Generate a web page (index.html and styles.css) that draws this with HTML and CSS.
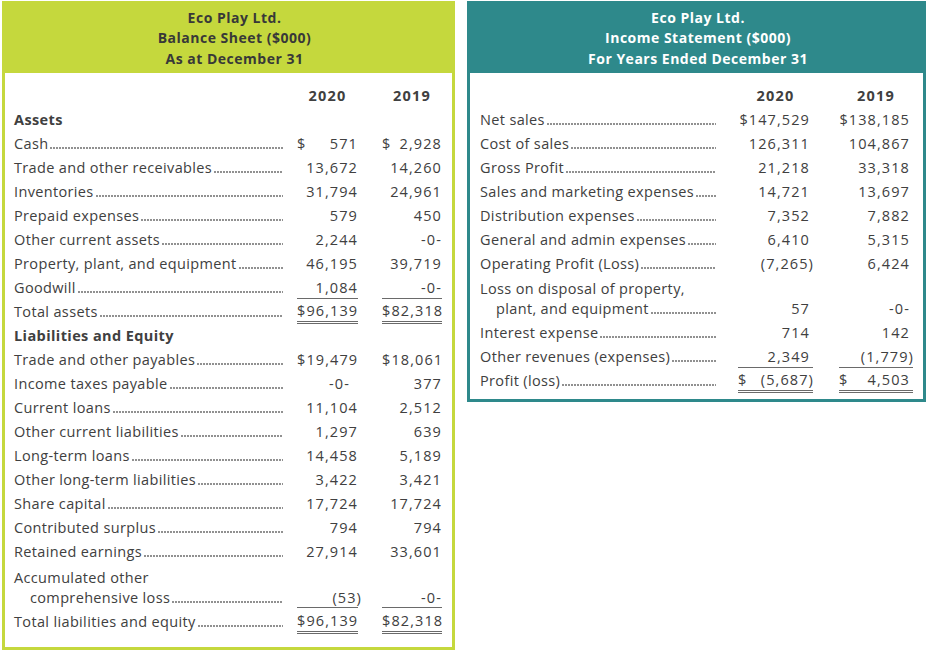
FILE: index.html
```html
<!DOCTYPE html>
<html>
<head>
<meta charset="utf-8">
<link rel="stylesheet" href="styles.css">
</head>
<body>
<div class="page">
  <section class="panel bs">
    <header class="ph">
      <div>Eco Play Ltd.</div>
      <div>Balance Sheet ($000)</div>
      <div>As at December 31</div>
    </header>
    <div class="body">
      <div class="row yr"><div class="lbl"></div><div class="c1"><span class="v">2020</span></div><div class="c2"><span class="v">2019</span></div></div>
      <div class="row"><div class="lbl"><b class="t">Assets</b></div></div>
      <div class="row"><div class="lbl"><span class="t">Cash</span><i class="d"></i></div><div class="c1"><span class="v sp"><span>$</span><span>571</span></span></div><div class="c2"><span class="v sp"><span>$</span><span>2,928</span></span></div></div>
      <div class="row"><div class="lbl"><span class="t">Trade and other receivables</span><i class="d"></i></div><div class="c1"><span class="v">13,672</span></div><div class="c2"><span class="v">14,260</span></div></div>
      <div class="row"><div class="lbl"><span class="t">Inventories</span><i class="d"></i></div><div class="c1"><span class="v">31,794</span></div><div class="c2"><span class="v">24,961</span></div></div>
      <div class="row"><div class="lbl"><span class="t">Prepaid expenses</span><i class="d"></i></div><div class="c1"><span class="v">579</span></div><div class="c2"><span class="v">450</span></div></div>
      <div class="row"><div class="lbl"><span class="t">Other current assets</span><i class="d"></i></div><div class="c1"><span class="v">2,244</span></div><div class="c2"><span class="v">-0-</span></div></div>
      <div class="row"><div class="lbl"><span class="t">Property, plant, and equipment</span><i class="d"></i></div><div class="c1"><span class="v">46,195</span></div><div class="c2"><span class="v">39,719</span></div></div>
      <div class="row"><div class="lbl"><span class="t">Goodwill</span><i class="d"></i></div><div class="c1"><span class="v u">1,084</span></div><div class="c2"><span class="v u">-0-</span></div></div>
      <div class="row"><div class="lbl"><span class="t">Total assets</span><i class="d"></i></div><div class="c1"><span class="v dd">$96,139</span></div><div class="c2"><span class="v dd">$82,318</span></div></div>
      <div class="row"><div class="lbl"><b class="t">Liabilities and Equity</b></div></div>
      <div class="row"><div class="lbl"><span class="t">Trade and other payables</span><i class="d"></i></div><div class="c1"><span class="v">$19,479</span></div><div class="c2"><span class="v">$18,061</span></div></div>
      <div class="row"><div class="lbl"><span class="t">Income taxes payable</span><i class="d"></i></div><div class="c1"><span class="v zero">-0-</span></div><div class="c2"><span class="v">377</span></div></div>
      <div class="row"><div class="lbl"><span class="t">Current loans</span><i class="d"></i></div><div class="c1"><span class="v">11,104</span></div><div class="c2"><span class="v">2,512</span></div></div>
      <div class="row"><div class="lbl"><span class="t">Other current liabilities</span><i class="d"></i></div><div class="c1"><span class="v">1,297</span></div><div class="c2"><span class="v">639</span></div></div>
      <div class="row"><div class="lbl"><span class="t">Long-term loans</span><i class="d"></i></div><div class="c1"><span class="v">14,458</span></div><div class="c2"><span class="v">5,189</span></div></div>
      <div class="row"><div class="lbl"><span class="t">Other long-term liabilities</span><i class="d"></i></div><div class="c1"><span class="v">3,422</span></div><div class="c2"><span class="v">3,421</span></div></div>
      <div class="row"><div class="lbl"><span class="t">Share capital</span><i class="d"></i></div><div class="c1"><span class="v">17,724</span></div><div class="c2"><span class="v">17,724</span></div></div>
      <div class="row"><div class="lbl"><span class="t">Contributed surplus</span><i class="d"></i></div><div class="c1"><span class="v">794</span></div><div class="c2"><span class="v">794</span></div></div>
      <div class="row"><div class="lbl"><span class="t">Retained earnings</span><i class="d"></i></div><div class="c1"><span class="v">27,914</span></div><div class="c2"><span class="v">33,601</span></div></div>
      <div class="row two acc"><div class="lbl2"><div class="l1">Accumulated other</div><div class="lead"><span class="t">comprehensive loss</span><i class="d"></i></div></div><div class="c1"><span class="v u"><span class="neg">(53)</span></span></div><div class="c2"><span class="v u">-0-</span></div></div>
      <div class="row"><div class="lbl"><span class="t">Total liabilities and equity</span><i class="d"></i></div><div class="c1"><span class="v dd">$96,139</span></div><div class="c2"><span class="v dd">$82,318</span></div></div>
    </div>
  </section>

  <section class="panel is">
    <header class="ph">
      <div>Eco Play Ltd.</div>
      <div>Income Statement ($000)</div>
      <div>For Years Ended December 31</div>
    </header>
    <div class="body">
      <div class="row yr"><div class="lbl"></div><div class="c1"><span class="v">2020</span></div><div class="c2"><span class="v">2019</span></div></div>
      <div class="row"><div class="lbl"><span class="t">Net sales</span><i class="d"></i></div><div class="c1"><span class="v">$147,529</span></div><div class="c2"><span class="v">$138,185</span></div></div>
      <div class="row"><div class="lbl"><span class="t">Cost of sales</span><i class="d"></i></div><div class="c1"><span class="v">126,311</span></div><div class="c2"><span class="v">104,867</span></div></div>
      <div class="row"><div class="lbl"><span class="t">Gross Profit</span><i class="d"></i></div><div class="c1"><span class="v">21,218</span></div><div class="c2"><span class="v">33,318</span></div></div>
      <div class="row"><div class="lbl"><span class="t">Sales and marketing expenses</span><i class="d"></i></div><div class="c1"><span class="v">14,721</span></div><div class="c2"><span class="v">13,697</span></div></div>
      <div class="row"><div class="lbl"><span class="t">Distribution expenses</span><i class="d"></i></div><div class="c1"><span class="v">7,352</span></div><div class="c2"><span class="v">7,882</span></div></div>
      <div class="row"><div class="lbl"><span class="t">General and admin expenses</span><i class="d"></i></div><div class="c1"><span class="v">6,410</span></div><div class="c2"><span class="v">5,315</span></div></div>
      <div class="row"><div class="lbl"><span class="t">Operating Profit (Loss)</span><i class="d"></i></div><div class="c1"><span class="v"><span class="neg">(7,265)</span></span></div><div class="c2"><span class="v">6,424</span></div></div>
      <div class="row two loss"><div class="lbl2"><div class="l1">Loss on disposal of property,</div><div class="lead"><span class="t">plant, and equipment</span><i class="d"></i></div></div><div class="c1"><span class="v">57</span></div><div class="c2"><span class="v">-0-</span></div></div>
      <div class="row"><div class="lbl"><span class="t">Interest expense</span><i class="d"></i></div><div class="c1"><span class="v">714</span></div><div class="c2"><span class="v">142</span></div></div>
      <div class="row"><div class="lbl"><span class="t">Other revenues (expenses)</span><i class="d"></i></div><div class="c1"><span class="v u">2,349</span></div><div class="c2"><span class="v u"><span class="neg">(1,779)</span></span></div></div>
      <div class="row"><div class="lbl"><span class="t">Profit (loss)</span><i class="d"></i></div><div class="c1"><span class="v dd sp"><span>$</span><span class="neg">(5,687)</span></span></div><div class="c2"><span class="v dd sp"><span>$</span><span>4,503</span></span></div></div>
    </div>
  </section>
</div>
</body>
</html>
```

FILE: styles.css
```css
html, body {
  margin: 0;
  background: #ffffff;
}
body {
  font-family: "Open Sans", Lato, sans-serif;
  font-size: 14.5px;
  color: #404040;
}
.page {
  display: flex;
  align-items: flex-start;
  gap: 12px;
  padding: 1px 0 0 2px;
}
.panel {
  box-sizing: border-box;
  border: 3px solid;
}
.bs {
  width: 453px;
  height: 649px;
  border-color: #c5d83d;
}
.is {
  width: 459px;
  border-color: #2e898b;
}
.ph {
  height: 69px;
  display: flex;
  flex-direction: column;
  align-items: center;
  justify-content: center;
  font-weight: 700;
  font-size: 14px;
  letter-spacing: 0.5px;
  line-height: 20.5px;
  margin: -3px -3px 0;
  padding-top: 3px;
}
.bs .ph {
  background: #c5d83d;
  color: #383838;
  padding-left: 12px;
}
.is .ph {
  background: #2e898b;
  color: #ffffff;
  padding-left: 3px;
}
.body {
  display: flex;
  flex-direction: column;
  padding-top: 11px;
}
.bs .body {
  padding: 11px 11px 0 9px;
}
.is .body {
  padding: 11px 10px 6px 10px;
}
.row {
  display: flex;
  align-items: center;
  height: 24px;
  line-height: 20px;
}
.row.two {
  height: auto;
  align-items: flex-end;
}
.acc { padding: 4px 0 2px; }
.loss { padding: 3px 0 2px; }
.two .c1, .two .c2 { height: 20px; display: flex; }
.lbl {
  flex: 1;
  display: flex;
  align-items: baseline;
  min-width: 0;
}
.lbl2 {
  flex: 1;
  display: flex;
  flex-direction: column;
  min-width: 0;
  letter-spacing: 0.35px;
}
.lead {
  display: flex;
  align-items: baseline;
  padding-left: 16px;
}
.t {
  white-space: nowrap;
  letter-spacing: 0.35px;
}
b.t { font-weight: 700; letter-spacing: 0.4px; }
.d {
  flex: 1;
  height: 2px;
  margin-left: 2px;
  background-image: radial-gradient(circle at 1px 1px, #4a4a4a 0.55px, rgba(74,74,74,0) 0.95px);
  background-size: 3px 2px;
  background-repeat: repeat-x;
}
.c1, .c2 {
  display: flex;
  justify-content: flex-end;
}
.v {
  display: block;
  text-align: right;
  white-space: nowrap;
  box-sizing: border-box;
  letter-spacing: 1.1px;
}
.sp {
  display: flex;
  justify-content: space-between;
}
.yr .v { text-align: center; font-weight: 700; letter-spacing: 1.2px; }
.u { border-bottom: 1px solid #6a6a6a; }
.dd { border-bottom: 3px double #6a6a6a; }

/* balance sheet columns */
.bs .c1 { width: 74px; }
.bs .c2 { width: 84px; }
.bs .c1 .v { width: 61px; margin-right: -1px; }
.bs .c2 .v { width: 60px; margin-right: -1px; }
.bs .neg { margin-right: -4px; }
.bs .zero { padding-right: 8px; }

/* income statement columns */
.is .c1 { width: 97px; }
.is .c2 { width: 100px; }
.is .c1 .v { width: 75px; padding-right: 3px; }
.is .c2 .v { width: 74px; padding-right: 3px; }
.is .yr .v { padding-right: 0; }
.is .neg { margin-right: -4px; }
```
